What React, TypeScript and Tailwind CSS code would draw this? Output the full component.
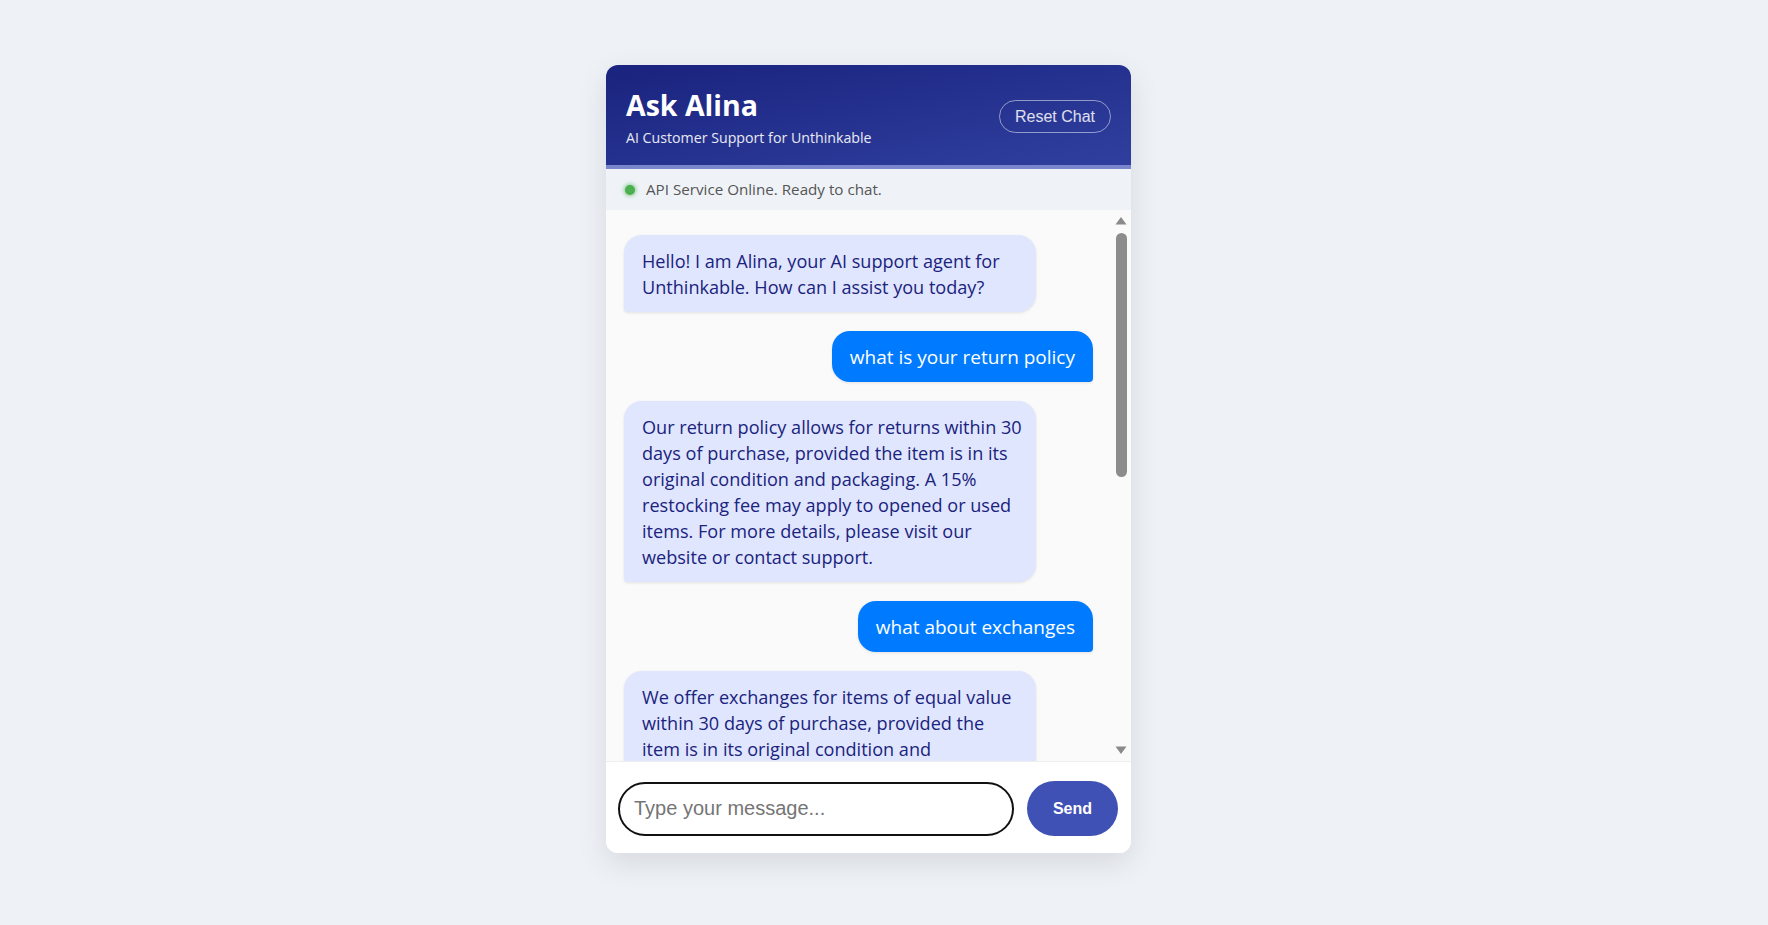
import React from "react";

const botFont = { fontFamily: '"Open Sans", "Noto Sans", sans-serif' };

type Msg = { from: "bot" | "user"; lines: string[] };

const messages: Msg[] = [
  {
    from: "bot",
    lines: ["Hello! I am Alina, your AI support agent for", "Unthinkable. How can I assist you today?"],
  },
  { from: "user", lines: ["what is your return policy"] },
  {
    from: "bot",
    lines: [
      "Our return policy allows for returns within 30",
      "days of purchase, provided the item is in its",
      "original condition and packaging. A 15%",
      "restocking fee may apply to opened or used",
      "items. For more details, please visit our",
      "website or contact support.",
    ],
  },
  { from: "user", lines: ["what about exchanges"] },
  {
    from: "bot",
    lines: [
      "We offer exchanges for items of equal value",
      "within 30 days of purchase, provided the",
      "item is in its original condition and",
      "packaging. Please contact our support team",
      "to start an exchange.",
    ],
  },
];

function Bubble({ m }: { m: Msg }) {
  if (m.from === "bot") {
    return (
      <div className="flex justify-start">
        <div className="w-[412px] shrink-0 rounded-[18px] rounded-bl-[4px] bg-[#e0e6fd] px-[18px] pt-[14px] pb-[11px] text-[18.1px] leading-[25.9px] text-[#1a237e] shadow-[0_1px_3px_rgba(0,0,0,0.1)]">
          {m.lines.map((l, i) => (
            <div key={i} className="whitespace-nowrap">
              {l}
            </div>
          ))}
        </div>
      </div>
    );
  }
  return (
    <div className="flex justify-end">
      <div className="rounded-[18px] rounded-br-[4px] bg-[#007bff] px-[18px] pt-[14.5px] pb-[11.5px] text-[19px] leading-[25.6px] text-white shadow-[0_1px_3px_rgba(0,0,0,0.1)]">
        {m.lines.map((l, i) => (
          <div key={i} className="whitespace-nowrap">
            {l}
          </div>
        ))}
      </div>
    </div>
  );
}

export default function App() {
  return (
    <div className="min-h-screen w-full bg-[#eef1f6] pt-[65px] pr-[31px] flex justify-center items-start" style={botFont}>
      <div className="flex h-[788px] w-[525px] flex-col overflow-hidden rounded-xl bg-white shadow-[0_10px_30px_rgba(0,0,0,0.1)]">
        {/* Header */}
        <div className="flex items-center justify-between border-b-4 border-[#7986cb] bg-gradient-to-br from-[#1a237e] to-[#303f9f] px-5 pt-5 pb-[18px]">
          <div className="flex flex-col">
            <div className="text-[28.5px] font-bold leading-[40px] text-white">Ask Alina</div>
            <div className="mt-[4px] text-[14.2px] leading-[18px] text-white/90">AI Customer Support for Unthinkable</div>
          </div>
          <button
            className="rounded-full border border-white/50 bg-transparent px-[15px] py-[6px] text-[16px] leading-[19px] text-white/85"
            style={{ fontFamily: '"Liberation Sans", Arial, sans-serif' }}
          >
            Reset Chat
          </button>
        </div>

        {/* Status */}
        <div className="flex h-[41px] items-center gap-[11px] bg-[#eff3f8] pl-[19px] pr-5">
          <span className="h-[10px] w-[10px] rounded-full bg-[#4caf50] shadow-[0_0_5px_#4caf50]" />
          <span className="text-[15.2px] text-[#555]">API Service Online. Ready to chat.</span>
        </div>

        {/* Messages + scrollbar */}
        <div className="flex min-h-0 flex-1 border-b border-[#eeeeee] bg-[#fafafa]">
          <div className="flex min-w-0 flex-1 flex-col gap-[19px] overflow-hidden pl-[18px] pr-[21px] pt-[25px]">
            {messages.map((m, i) => (
              <Bubble key={i} m={m} />
            ))}
          </div>
          <div className="flex w-[17px] shrink-0 flex-col items-start pl-[1px] pt-[6px] pb-[6px]">
            <svg width="12" height="9" viewBox="0 0 12 9" className="shrink-0">
              <path d="M6 1 L11.5 8.5 L0.5 8.5 Z" fill="#8a8a8a" />
            </svg>
            <div className="ml-[1px] mt-[8px] h-[244px] w-[11px] rounded-full bg-[#8c8c8c]" />
            <div className="flex-1" />
            <svg width="12" height="9" viewBox="0 0 12 9" className="shrink-0">
              <path d="M0.5 0.5 L11.5 0.5 L6 8 Z" fill="#8a8a8a" />
            </svg>
          </div>
        </div>

        {/* Input */}
        <div className="flex items-center gap-[13px] bg-white pl-3 pr-[13px] pt-[19px] pb-[17px]">
          <input
            autoFocus
            placeholder="Type your message..."
            className="h-[54px] min-w-0 flex-1 rounded-full border-2 border-[#111] bg-white px-[14px] text-[20px] text-[#222] caret-[#111] outline-none placeholder:text-[#757575]"
            style={{ fontFamily: '"Liberation Sans", Arial, sans-serif' }}
          />
          <button
            className="h-[55px] w-[91px] shrink-0 rounded-full bg-[#3f51b5] text-[16px] font-bold text-white"
            style={{ fontFamily: '"Liberation Sans", Arial, sans-serif' }}
          >
            Send
          </button>
        </div>
      </div>
    </div>
  );
}
